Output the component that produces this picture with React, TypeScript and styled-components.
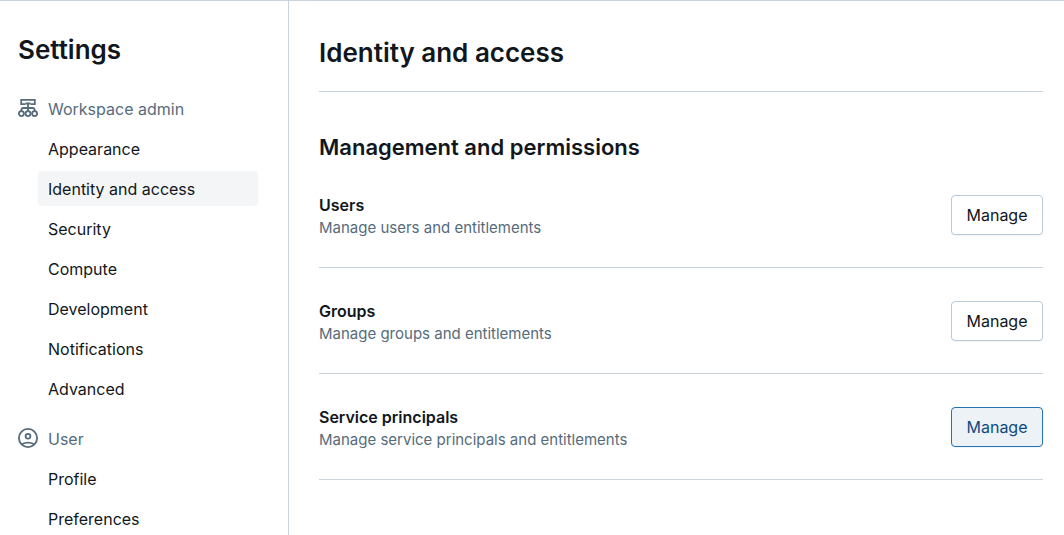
import React from "react";
import styled, { createGlobalStyle, css } from "styled-components";

const color = {
  text: "#11171c",
  muted: "#566b7b",
  line: "#cbd4dc",
  frame: "#c9d2e0",
  hover: "#f4f5f7",
  control: "#b9c9d8",
  activeLine: "#2272b4",
  activeFill: "#edf2f7",
  activeText: "#0e4a80",
};

const GlobalStyle = createGlobalStyle`
  *, *::before, *::after { box-sizing: border-box; }
  body {
    margin: 0;
    background: #fff;
    color: ${color.text};
    font-family: Inter, "Liberation Sans", sans-serif;
    font-size: 16px;
    line-height: 20px;
  }
  h1, h2, h3, p, ul { margin: 0; padding: 0; }
  ul { list-style: none; }
`;

const Page = styled.div`
  display: flex;
  height: 100vh;
  overflow: hidden;
  border-top: 1px solid ${color.frame};
`;

const Sidebar = styled.nav`
  flex: 0 0 289px;
  padding: 33px 30px 0 18px;
  border-right: 1px solid ${color.frame};
`;

const SidebarTitle = styled.h2`
  margin-bottom: 23px;
  font-size: 26px;
  line-height: 32px;
  font-weight: 600;
`;

const SectionLabel = styled.h3`
  display: flex;
  align-items: center;
  gap: 10px;
  height: 40px;
  color: ${color.muted};
  font-size: 16px;
  font-weight: 400;

  svg { flex: none; margin-bottom: 2px; }
`;

const NavList = styled.ul`
  display: grid;
  gap: 5px;
  padding: 2px 0 13px 20px;
`;

const NavLink = styled.a<{ $current?: boolean }>`
  display: flex;
  align-items: center;
  height: 35px;
  padding: 0 10px;
  border-radius: 4px;
  color: inherit;
  text-decoration: none;
  background: ${(p) => (p.$current ? color.hover : "transparent")};
`;

const Content = styled.main`
  flex: 1;
  min-width: 0;
  padding: 30px 21px 0 30px;
`;

const PageTitle = styled.h1`
  padding: 6px 0 22px;
  border-bottom: 1px solid ${color.line};
  font-size: 26px;
  line-height: 32px;
  font-weight: 600;
`;

const GroupTitle = styled.h2`
  margin-top: 40px;
  font-size: 22px;
  line-height: 30px;
  font-weight: 600;
`;

const SettingRow = styled.section`
  display: flex;
  align-items: flex-start;
  justify-content: space-between;
  padding: 33px 0 29px;
  border-bottom: 1px solid ${color.line};
`;

const SettingText = styled.div`
  display: grid;
  gap: 3px;
`;

const SettingName = styled.h3`
  font-size: 16px;
  font-weight: 600;
`;

const SettingHint = styled.p`
  color: ${color.muted};
  font-size: 15px;
`;

const Button = styled.button<{ $active?: boolean }>`
  width: 92px;
  height: 40px;
  padding: 0;
  border: 1px solid ${color.control};
  border-radius: 4px;
  background: #fff;
  box-shadow: 0 1px 1px rgba(17, 23, 28, 0.05);
  color: ${color.text};
  font: inherit;
  cursor: pointer;

  ${(p) =>
    p.$active &&
    css`
      border-color: ${color.activeLine};
      background: ${color.activeFill};
      color: ${color.activeText};
    `}
`;

const WorkspaceIcon = () => (
  <svg width="20" height="20" viewBox="0 0 20 20" fill="none" stroke="currentColor" strokeWidth="1.8" aria-hidden="true">
    <path d="M7.4 6.1H3.2V1.9H16.8V6.1H12.6" />
    <path d="M7.4 5.5H12.6M10 5.5V13.2" />
    <path d="M3.4 13.2V12Q3.4 10 5.4 10H14.6Q16.6 10 16.6 12V13.2" />
    <circle cx="3.4" cy="15.6" r="2.5" />
    <circle cx="10" cy="15.6" r="2.5" />
    <circle cx="16.6" cy="15.6" r="2.5" />
  </svg>
);

const UserIcon = () => (
  <svg width="20" height="20" viewBox="0 0 20 20" fill="none" stroke="currentColor" strokeWidth="1.8" aria-hidden="true">
    <circle cx="10" cy="10" r="9.1" />
    <circle cx="10" cy="8.3" r="2.4" />
    <path d="M3.8 16.2Q6.6 14.7 10 14.7T16.2 16.2" />
  </svg>
);

const sections = [
  {
    label: "Workspace admin",
    Icon: WorkspaceIcon,
    items: ["Appearance", "Identity and access", "Security", "Compute", "Development", "Notifications", "Advanced"],
  },
  { label: "User", Icon: UserIcon, items: ["Profile", "Preferences"] },
];

const settings = [
  { name: "Users", hint: "Manage users and entitlements" },
  { name: "Groups", hint: "Manage groups and entitlements" },
  { name: "Service principals", hint: "Manage service principals and entitlements", active: true },
];

const current = "Identity and access";

export default function App() {
  return (
    <>
      <GlobalStyle />
      <Page>
        <Sidebar aria-label="Settings">
          <SidebarTitle>Settings</SidebarTitle>
          {sections.map(({ label, Icon, items }) => (
            <React.Fragment key={label}>
              <SectionLabel>
                <Icon />
                {label}
              </SectionLabel>
              <NavList>
                {items.map((item) => (
                  <li key={item}>
                    <NavLink href="#" $current={item === current} aria-current={item === current ? "page" : undefined}>
                      {item}
                    </NavLink>
                  </li>
                ))}
              </NavList>
            </React.Fragment>
          ))}
        </Sidebar>
        <Content>
          <PageTitle>{current}</PageTitle>
          <GroupTitle>Management and permissions</GroupTitle>
          {settings.map(({ name, hint, active }) => (
            <SettingRow key={name}>
              <SettingText>
                <SettingName>{name}</SettingName>
                <SettingHint>{hint}</SettingHint>
              </SettingText>
              <Button type="button" $active={active} aria-label={`Manage ${name}`}>
                Manage
              </Button>
            </SettingRow>
          ))}
        </Content>
      </Page>
    </>
  );
}
